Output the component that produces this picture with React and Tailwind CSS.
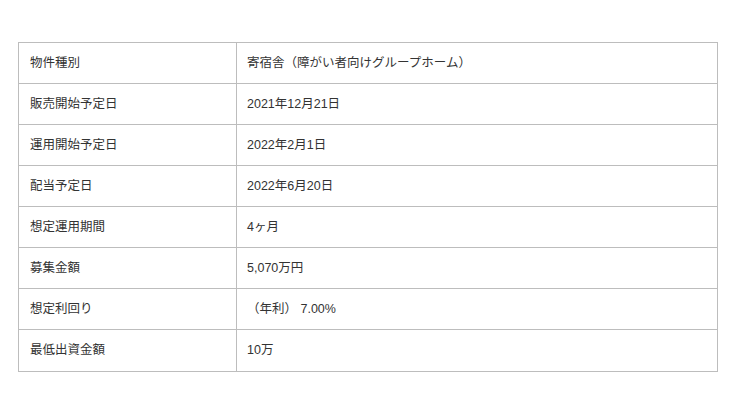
export default function App() {
  const rows = [
    ["物件種別", "寄宿舎（障がい者向けグループホーム）"],
    ["販売開始予定日", "2021年12月21日"],
    ["運用開始予定日", "2022年2月1日"],
    ["配当予定日", "2022年6月20日"],
    ["想定運用期間", "4ヶ月"],
    ["募集金額", "5,070万円"],
    ["想定利回り", "（年利） 7.00%"],
    ["最低出資金額", "10万"],
  ];
  return (
    <div
      className="w-[740px] h-[411px] bg-white pt-[42px] pl-[18px]"
      style={{ fontFamily: '"Liberation Sans", "Noto Sans CJK JP", sans-serif' }}
    >
      <div className="w-[700px] border border-[#bdbdbd] flex flex-col text-[12.5px] text-[#333333]">
        {rows.map(([k, v], i) => (
          <div
            key={i}
            className={`flex h-[41px] ${i < rows.length - 1 ? "border-b border-[#bdbdbd]" : "h-[40px]"}`}
          >
            <div className="w-[218px] shrink-0 border-r border-[#bdbdbd] pl-[11px] flex items-center">
              {k}
            </div>
            <div className="flex-1 pl-[10px] flex items-center">{v}</div>
          </div>
        ))}
      </div>
    </div>
  );
}
